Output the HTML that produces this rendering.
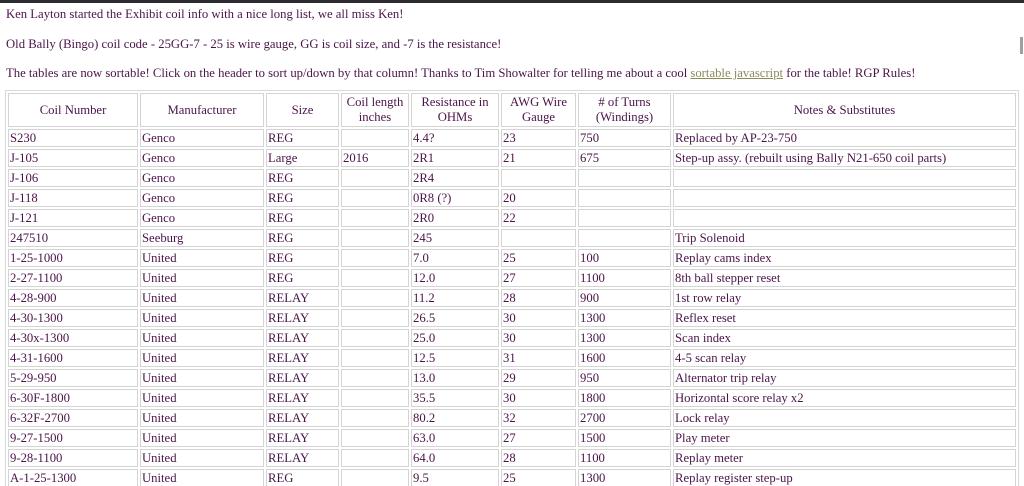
<!DOCTYPE html>
<html><head><meta charset="utf-8">
<style>
html,body{margin:0;padding:0;background:#fff;width:1024px;height:486px;overflow:hidden;}
body{font-family:"Liberation Serif",serif;font-size:12.7px;color:#4a1448;position:relative;}
.bar{position:absolute;left:0;top:0;width:1024px;height:3px;background:#2b2b30;}
.sb{position:absolute;left:1020px;top:37px;width:3px;height:17px;background:#a0a0a0;}
p{margin:0;position:absolute;left:6px;line-height:16px;white-space:nowrap;}
a{color:#8a8a5a;text-decoration:underline;}
table{position:absolute;left:5px;top:90px;border-collapse:separate;border-spacing:2px;border:1px solid #d8d8d8;table-layout:fixed;width:1014px;}
td,th{border:1px solid #d4d4d4;padding:0 1px;font-weight:normal;line-height:16px;height:16px;white-space:nowrap;overflow:hidden;text-align:left;}
th{text-align:center;height:32px;line-height:15px;white-space:normal;}
</style></head><body>
<div class="bar"></div><div class="sb"></div>
<p style="top:6px">Ken Layton started the Exhibit coil info with a nice long list, we all miss Ken!</p>
<p style="top:36px">Old Bally (Bingo) coil code - 25GG-7 - 25 is wire gauge, GG is coil size, and -7 is the resistance!</p>
<p style="top:65px">The tables are now sortable! Click on the header to sort up/down by that column! Thanks to Tim Showalter for telling me about a cool <a>sortable javascript</a> for the table! RGP Rules!</p>
<table>
<colgroup><col style="width:130px"><col style="width:124px"><col style="width:73px"><col style="width:68px"><col style="width:88px"><col style="width:75px"><col style="width:93px"><col></colgroup>
<tr><th>Coil Number</th><th>Manufacturer</th><th>Size</th><th>Coil length inches</th><th>Resistance in OHMs</th><th>AWG Wire Gauge</th><th># of Turns (Windings)</th><th>Notes &amp; Substitutes</th></tr>
<tr><td>S230</td><td>Genco</td><td>REG</td><td></td><td>4.4?</td><td>23</td><td>750</td><td>Replaced by AP-23-750</td></tr>
<tr><td>J-105</td><td>Genco</td><td>Large</td><td>2016</td><td>2R1</td><td>21</td><td>675</td><td>Step-up assy. (rebuilt using Bally N21-650 coil parts)</td></tr>
<tr><td>J-106</td><td>Genco</td><td>REG</td><td></td><td>2R4</td><td></td><td></td><td></td></tr>
<tr><td>J-118</td><td>Genco</td><td>REG</td><td></td><td>0R8 (?)</td><td>20</td><td></td><td></td></tr>
<tr><td>J-121</td><td>Genco</td><td>REG</td><td></td><td>2R0</td><td>22</td><td></td><td></td></tr>
<tr><td>247510</td><td>Seeburg</td><td>REG</td><td></td><td>245</td><td></td><td></td><td>Trip Solenoid</td></tr>
<tr><td>1-25-1000</td><td>United</td><td>REG</td><td></td><td>7.0</td><td>25</td><td>100</td><td>Replay cams index</td></tr>
<tr><td>2-27-1100</td><td>United</td><td>REG</td><td></td><td>12.0</td><td>27</td><td>1100</td><td>8th ball stepper reset</td></tr>
<tr><td>4-28-900</td><td>United</td><td>RELAY</td><td></td><td>11.2</td><td>28</td><td>900</td><td>1st row relay</td></tr>
<tr><td>4-30-1300</td><td>United</td><td>RELAY</td><td></td><td>26.5</td><td>30</td><td>1300</td><td>Reflex reset</td></tr>
<tr><td>4-30x-1300</td><td>United</td><td>RELAY</td><td></td><td>25.0</td><td>30</td><td>1300</td><td>Scan index</td></tr>
<tr><td>4-31-1600</td><td>United</td><td>RELAY</td><td></td><td>12.5</td><td>31</td><td>1600</td><td>4-5 scan relay</td></tr>
<tr><td>5-29-950</td><td>United</td><td>RELAY</td><td></td><td>13.0</td><td>29</td><td>950</td><td>Alternator trip relay</td></tr>
<tr><td>6-30F-1800</td><td>United</td><td>RELAY</td><td></td><td>35.5</td><td>30</td><td>1800</td><td>Horizontal score relay x2</td></tr>
<tr><td>6-32F-2700</td><td>United</td><td>RELAY</td><td></td><td>80.2</td><td>32</td><td>2700</td><td>Lock relay</td></tr>
<tr><td>9-27-1500</td><td>United</td><td>RELAY</td><td></td><td>63.0</td><td>27</td><td>1500</td><td>Play meter</td></tr>
<tr><td>9-28-1100</td><td>United</td><td>RELAY</td><td></td><td>64.0</td><td>28</td><td>1100</td><td>Replay meter</td></tr>
<tr><td>A-1-25-1300</td><td>United</td><td>REG</td><td></td><td>9.5</td><td>25</td><td>1300</td><td>Replay register step-up</td></tr>
</table>
</body></html>
